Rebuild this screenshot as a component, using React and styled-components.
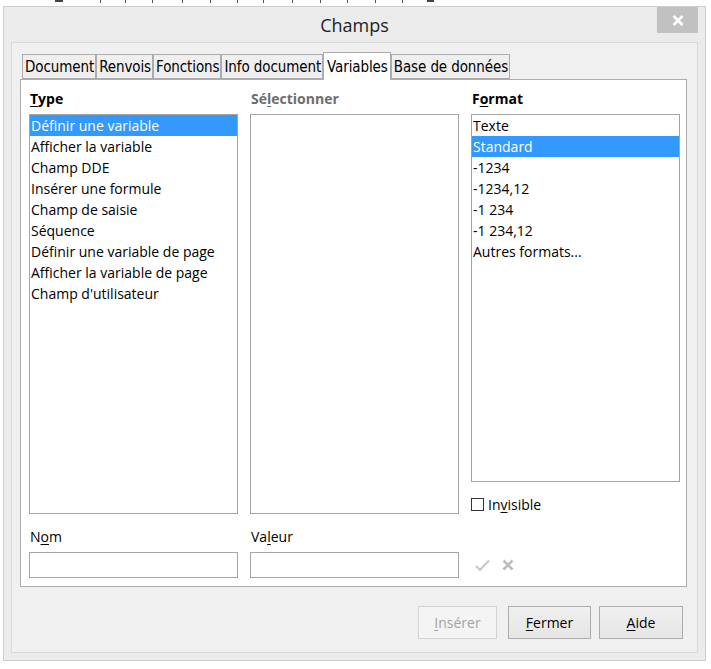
import React from "react";
import styled, { createGlobalStyle } from "styled-components";

const GlobalStyle = createGlobalStyle`
  html, body { margin: 0; padding: 0; background: #ffffff; }
  body {
    font-family: "Open Sans", "Noto Sans", sans-serif;
    font-size: 14px;
    color: #000;
  }
  * { box-sizing: border-box; }
`;

const Screen = styled.div`
  width: 711px;
  height: 669px;
  overflow: hidden;
  display: flex;
  flex-direction: column;
  background: #fff;
`;

const RulerSvg = styled.svg`
  display: block;
  flex: none;
`;

const Window = styled.div`
  margin-left: 3px;
  width: 703px;
  height: 655px;
  border: 1px solid #cdcdcd;
  background: #ebebeb;
  display: flex;
  flex-direction: column;
  padding: 0 7px 7px 7px;
`;

const TitleBar = styled.div`
  height: 35px;
  display: grid;
  grid-template-columns: 1fr auto 1fr;
  align-items: center;
`;

const Title = styled.div`
  grid-column: 2;
  font-size: 18px;
  color: #222;
  line-height: 24px;
  padding-top: 1px;
`;

const CloseButton = styled.div`
  grid-column: 3;
  justify-self: end;
  align-self: start;
  width: 41px;
  height: 26px;
  background: #c1c1c1;
  display: flex;
  align-items: center;
  justify-content: center;
`;

const Client = styled.div`
  flex: 1;
  background: #f0f0f0;
  border: 1px solid #d9d9d9;
  padding: 9px 10px 0 8px;
  display: flex;
  flex-direction: column;
`;

const TabRow = styled.div`
  display: flex;
  align-items: flex-end;
  height: 27px;
  padding-left: 2px;
  position: relative;
  z-index: 1;
`;

const Tab = styled.div`
  height: ${(p) => (p.$active ? "28px" : "25px")};
  margin-bottom: ${(p) => (p.$active ? "-1px" : "0")};
  border: 1px solid #acacac;
  border-bottom: ${(p) => (p.$active ? "none" : "1px solid #acacac")};
  background: ${(p) => (p.$active ? "#ffffff" : "#efefef")};
  padding: ${(p) => (p.$active ? "3px 2px 0 3px" : "2px 1px 0 2px")};
  font-family: "DejaVu Sans Condensed", "Liberation Sans Narrow", sans-serif;
  font-size: 15px;
  letter-spacing: -0.1px;
  line-height: ${(p) => (p.$active ? "23px" : "21px")};
  color: #000;
  white-space: nowrap;
`;

const Panel = styled.div`
  height: 508px;
  border: 1px solid #acacac;
  background: #fff;
  padding: 9px 7px 0 8px;
  display: flex;
  flex-direction: column;
`;

const Columns = styled.div`
  display: grid;
  grid-template-columns: 209px 209px 209px;
  column-gap: 12px;
`;

const Column = styled.div`
  display: flex;
  flex-direction: column;
`;

const Heading = styled.div`
  font-weight: 700;
  line-height: 20px;
  height: 20px;
  margin-bottom: 5px;
  padding-left: 1px;
  color: ${(p) => (p.$disabled ? "#6d6d6d" : "#000")};
`;

const Label = styled.div`
  line-height: 20px;
  height: 20px;
  margin-bottom: 5px;
  padding-left: 1px;
  color: #000;
`;

const U = styled.span`
  text-decoration: underline;
  text-underline-offset: 2px;
`;

const ListBox = styled.div`
  height: ${(p) => p.$h}px;
  border: 1px solid #a5a5a5;
  background: #fff;
  overflow: hidden;
`;

const ListItem = styled.div`
  height: 21px;
  line-height: 21px;
  padding-left: 1px;
  white-space: nowrap;
  background: ${(p) => (p.$selected ? "#3399ff" : "transparent")};
  color: ${(p) => (p.$selected ? "#fff" : "#000")};
`;

const CheckRow = styled.div`
  margin-top: 12px;
  height: 20px;
  display: flex;
  align-items: center;
  gap: 4px;
`;

const CheckBox = styled.span`
  width: 13px;
  height: 13px;
  border: 1px solid #333;
  background: #fff;
  display: inline-block;
`;

const BottomRow = styled.div`
  display: grid;
  grid-template-columns: 209px 209px 209px;
  column-gap: 12px;
  margin-top: 13px;
`;

const Input = styled.div`
  height: 26px;
  border: 1px solid #a5a5a5;
  background: #fff;
`;

const IconRow = styled.div`
  align-self: end;
  height: 26px;
  display: flex;
  align-items: center;
  gap: 12px;
  padding-left: 4px;
`;

const ButtonRow = styled.div`
  display: flex;
  justify-content: flex-end;
  margin-top: 19px;
  padding-right: 4px;
`;

const Button = styled.div`
  width: ${(p) => p.$w}px;
  height: 33px;
  margin-left: ${(p) => p.$gap}px;
  border: 1px solid ${(p) => (p.$disabled ? "#d3d3d3" : "#acacac")};
  background: ${(p) =>
    p.$disabled ? "#f4f4f4" : "linear-gradient(#f0f0f0, #e5e5e5)"};
  color: ${(p) => (p.$disabled ? "#a3a3a3" : "#000")};
  display: flex;
  align-items: center;
  justify-content: center;
  font-size: 14px;
`;

const Ruler = () => {
  const ticks = [100, 125, 152, 182, 210, 237, 263, 292, 320, 347, 375, 402];
  return (
    <RulerSvg width="711" height="6" viewBox="0 0 711 6">
      <rect x="55" y="0" width="8" height="2" fill="#444" />
      {ticks.map((x) => (
        <rect key={x} x={x} y="0" width="1" height="3" fill="#555" />
      ))}
      <rect x="427" y="0" width="7" height="2" fill="#444" />
    </RulerSvg>
  );
};

const typeItems = [
  "Définir une variable",
  "Afficher la variable",
  "Champ DDE",
  "Insérer une formule",
  "Champ de saisie",
  "Séquence",
  "Définir une variable de page",
  "Afficher la variable de page",
  "Champ d'utilisateur",
];

const formatItems = [
  "Texte",
  "Standard",
  "-1234",
  "-1234,12",
  "-1 234",
  "-1 234,12",
  "Autres formats...",
];

const tabs = [
  "Document",
  "Renvois",
  "Fonctions",
  "Info document",
  "Variables",
  "Base de données",
];

export default function App() {
  return (
    <>
      <GlobalStyle />
      <Screen>
        <Ruler />
        <Window>
          <TitleBar>
            <Title>Champs</Title>
            <CloseButton>
              <svg width="12" height="11" viewBox="0 0 12 11">
                <path d="M1.5 1 L10.5 10 M10.5 1 L1.5 10" stroke="#fff" strokeWidth="2.6" />
              </svg>
            </CloseButton>
          </TitleBar>
          <Client>
            <TabRow>
              {tabs.map((t) => (
                <Tab key={t} $active={t === "Variables"}>
                  {t}
                </Tab>
              ))}
            </TabRow>
            <Panel>
              <Columns>
                <Column>
                  <Heading>
                    <U>T</U>ype
                  </Heading>
                  <ListBox $h={400}>
                    {typeItems.map((it, i) => (
                      <ListItem key={it} $selected={i === 0}>
                        {it}
                      </ListItem>
                    ))}
                  </ListBox>
                </Column>
                <Column>
                  <Heading $disabled>
                    Sé<U>l</U>ectionner
                  </Heading>
                  <ListBox $h={400} />
                </Column>
                <Column>
                  <Heading>
                    F<U>o</U>rmat
                  </Heading>
                  <ListBox $h={368}>
                    {formatItems.map((it, i) => (
                      <ListItem key={it} $selected={i === 1}>
                        {it}
                      </ListItem>
                    ))}
                  </ListBox>
                  <CheckRow>
                    <CheckBox />
                    <span>
                      In<U>v</U>isible
                    </span>
                  </CheckRow>
                </Column>
              </Columns>
              <BottomRow>
                <Column>
                  <Label>
                    N<U>o</U>m
                  </Label>
                  <Input />
                </Column>
                <Column>
                  <Label>
                    Va<U>l</U>eur
                  </Label>
                  <Input />
                </Column>
                <IconRow>
                  <svg width="15" height="13" viewBox="0 0 15 13">
                    <path d="M1 7 L5 11 L14 1.5" fill="none" stroke="#c9c9c9" strokeWidth="2.2" />
                  </svg>
                  <svg width="12" height="12" viewBox="0 0 12 12">
                    <path d="M1.5 1.5 L10.5 10.5 M10.5 1.5 L1.5 10.5" stroke="#bdbdbd" strokeWidth="2.6" />
                  </svg>
                </IconRow>
              </BottomRow>
            </Panel>
            <ButtonRow>
              <Button $w={79} $gap={0} $disabled>
                <span>
                  <U>I</U>nsérer
                </span>
              </Button>
              <Button $w={83} $gap={11}>
                <span>
                  <U>F</U>ermer
                </span>
              </Button>
              <Button $w={84} $gap={8}>
                <span>
                  <U>A</U>ide
                </span>
              </Button>
            </ButtonRow>
          </Client>
        </Window>
      </Screen>
    </>
  );
}
